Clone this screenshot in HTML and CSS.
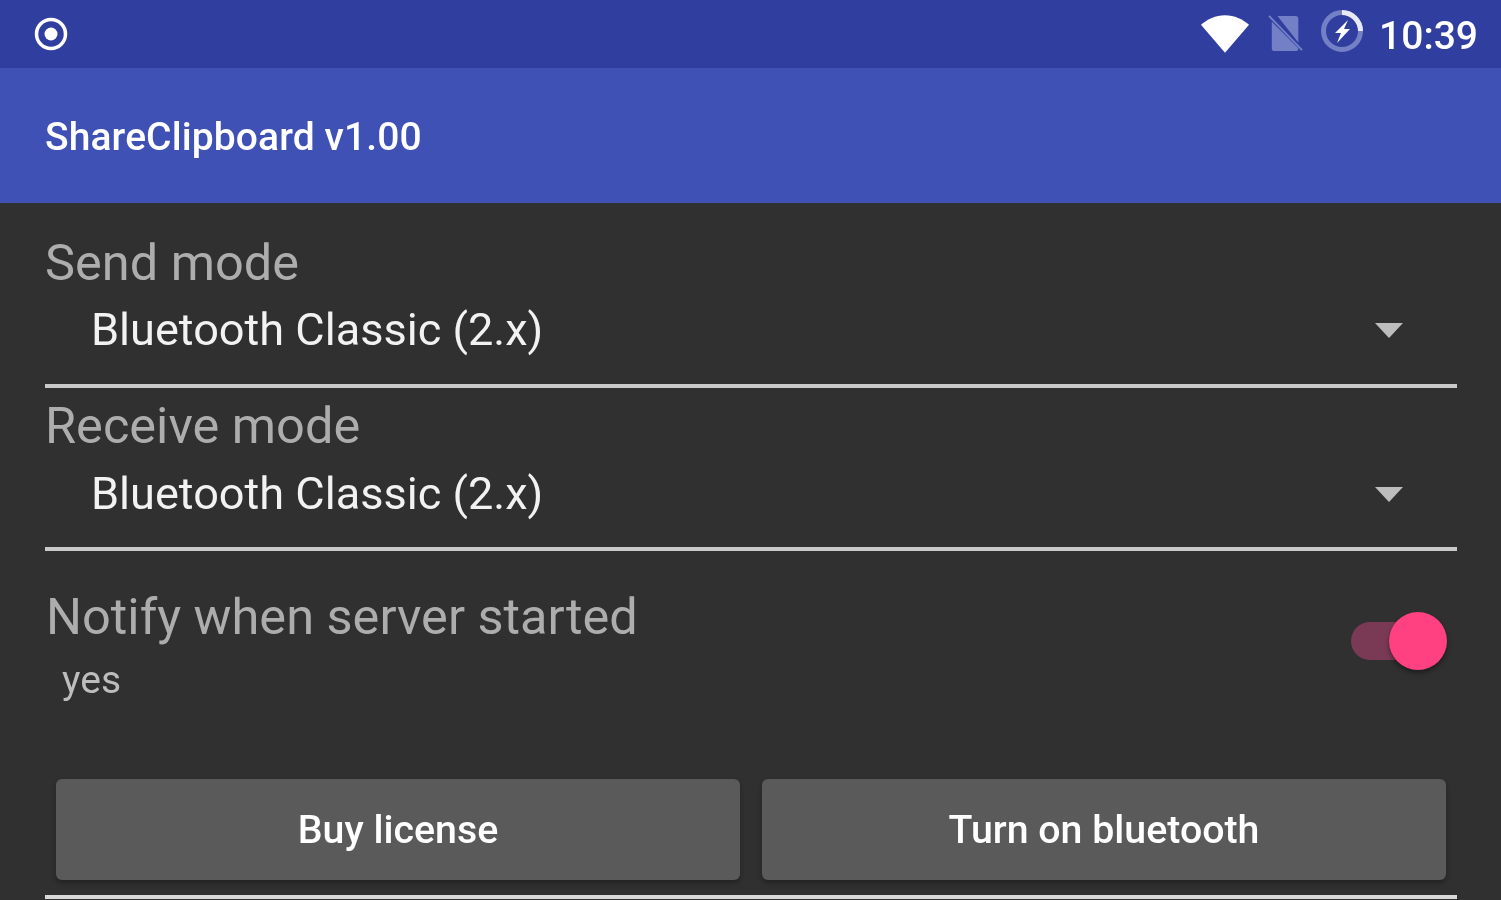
FILE: index.html
```html
<!doctype html>
<html lang="en">
<head>
  <meta charset="utf-8" />
  <title>ShareClipboard v1.00</title>
  <link rel="stylesheet" href="styles.css">
</head>
<body>
  <div class="statusbar">
    <svg class="ic-record" viewBox="0 0 36 36"><circle cx="18" cy="18" r="14.5" fill="none" stroke="#fff" stroke-width="3.5"/><circle cx="18" cy="18" r="6.5" fill="#fff"/></svg>
    <div class="status-right">
      <svg class="ic-wifi" viewBox="0 0 52 40"><path d="M1 11C8 5 16 1 26 1s18 4 25 10L26 40z" fill="#fff"/></svg>
      <svg class="ic-sim" viewBox="0 0 38 38"><path d="M4 7l28 28v1a2 2 0 0 1-2 2H7a3 3 0 0 1-3-3zM10 1h19a3 3 0 0 1 3 3v25z" fill="#7380c6"/><path d="M1 1l35 36" stroke="#7380c6" stroke-width="2"/></svg>
      <svg class="ic-saver" viewBox="0 0 44 44"><circle cx="22" cy="22" r="18.5" fill="none" stroke="#7380c6" stroke-width="5"/><path d="M22 3.5a18.500 18.500 0 0 1 18.500 18.500" fill="none" stroke="#e8eaf6" stroke-width="5"/><path d="M28 11l-13 13h6l-4 10 13-14h-6z" fill="#fff"/></svg>
      <span class="clock">10:39</span>
    </div>
  </div>
  <div class="appbar">ShareClipboard v1.00</div>

  <div class="content">
    <div class="field">
      <div class="field-label">Send mode</div>
      <div class="spinner">
        <span>Bluetooth Classic (2.x)</span>
        <span class="arrow"></span>
      </div>
    </div>
    <div class="field second">
      <div class="field-label">Receive mode</div>
      <div class="spinner">
        <span>Bluetooth Classic (2.x)</span>
        <span class="arrow"></span>
      </div>
    </div>

    <div class="notify">
      <div>
        <div class="field-label">Notify when server started</div>
        <div class="notify-sub">yes</div>
      </div>
      <div class="switch"><span class="thumb"></span></div>
    </div>

    <div class="buttons">
      <button type="button">Buy license</button>
      <button type="button">Turn on bluetooth</button>
    </div>
    <div class="bottom-line"></div>
  </div>
</body>
</html>
```

FILE: styles.css
```css
html,body{margin:0;height:900px;overflow:hidden}
body{background:#303030;font-family:Roboto,"Liberation Sans",sans-serif;color:#fff;filter:blur(.6px)}

.statusbar{height:68px;background:#303f9f;display:flex;align-items:center;justify-content:space-between;padding:0 23px 0 33px}
.ic-record{width:36px;height:36px}
.status-right{display:flex;align-items:center}
.ic-wifi{width:50px;height:39px;margin-right:18px;margin-top:-2px}
.ic-sim{width:36px;height:38px;margin-right:18px;margin-top:-2px}
.ic-saver{width:44px;height:44px;margin-right:15px;margin-top:-6px;margin-left:-2px}
.clock{font-size:39px;font-weight:500;line-height:44px;margin-top:4px}

.appbar{height:135px;box-sizing:border-box;background:#3f51b5;padding:46px 0 0 45px;font-size:39px;font-weight:500;line-height:46px;letter-spacing:.1px}

.content{padding:0 44px 0 45px}
.field{height:185px;box-sizing:border-box;border-bottom:4px solid #c9c9c9}
.field.second{height:163px}
.field-label{font-size:50.500px;line-height:56px;color:#adadad}
.field:first-child .field-label{padding-top:32px}
.field.second .field-label{padding-top:10px}
.spinner{display:flex;align-items:center;justify-content:space-between;padding:13px 54px 0 46px;font-size:45.100px;line-height:54px;color:#f2f2f2}
.field:first-child .spinner{padding-top:12px}
.arrow{width:0;height:0;border-left:14px solid transparent;border-right:14px solid transparent;border-top:15px solid #bdbdbd}

.notify{display:flex;justify-content:space-between;padding:38px 10px 0 1px;height:228px;box-sizing:border-box}
.notify-sub{font-size:39px;line-height:44px;color:#bdbdbd;padding-left:16px;margin-top:13px}
.switch{position:relative;width:82px;height:38px;margin-top:33px;margin-right:14px;background:#7a3a55;border-radius:19px}
.thumb{position:absolute;right:-14px;top:-10px;width:58px;height:58px;border-radius:50%;background:#ff4081;box-shadow:0 3px 5px rgba(0,0,0,.4)}

.buttons{display:flex;gap:22px;padding:0 11px}
.buttons button{flex:1;height:101px;border:0;border-radius:6px;background:#5a5a5b;color:#fff;font-family:inherit;font-size:39.300px;font-weight:500;box-shadow:0 3px 5px rgba(0,0,0,.3);padding:0}
.bottom-line{height:4px;margin-top:15px;background:#d8d8d8}
```
